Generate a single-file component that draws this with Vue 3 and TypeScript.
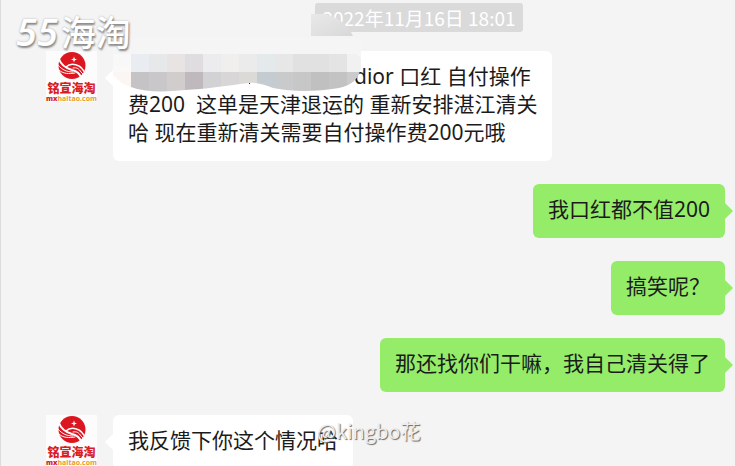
<script setup lang="ts">
interface Message {
  id: number
  side: 'in' | 'out'
  text: string
  masked?: boolean
}

const messages: Message[] = [
  {
    id: 1,
    side: 'in',
    masked: true,
    text: 'dior 口红 自付操作\n费200  这单是天津退运的 重新安排湛江清关\n哈 现在重新清关需要自付操作费200元哦',
  },
  { id: 2, side: 'out', text: '我口红都不值200' },
  { id: 3, side: 'out', text: '搞笑呢？' },
  { id: 4, side: 'out', text: '那还找你们干嘛，我自己清关得了' },
  { id: 5, side: 'in', text: '我反馈下你这个情况哈' },
]

const blockSize = 18
const upperBlocks = ['#e9edf1', '#e7e8ea', '#e8e4e3', '#dfdde0', '#ececee', '#f0efed', '#ebebeb', '#e4e9ec', '#e7e7e7', '#e1e1e2', '#e1e1e1', '#e4e4e4', '#ececec']
const lowerBlocks = ['#c5c3c5', '#cac7ca', '#d0cdcc', '#bfb9be', '#d2d2d4', '#d8d6d6', '#dcdad7', '#c5ccd1', '#c9cacc', '#c7c7c8', '#c0c0c0', '#c3c3c3', '#cbcbcb']
</script>

<template>
  <main class="chat">
    <div class="time-row"><time datetime="2022-11-16T18:01">2022年11月16日 18:01</time></div>

    <div v-for="m in messages" :key="m.id" class="row" :class="m.side">
      <div v-if="m.side === 'in'" class="avatar">
        <svg viewBox="0 0 28 28" aria-hidden="true">
          <circle cx="14" cy="13.5" r="13.5" fill="#dc1620" />
          <g fill="none" stroke="#fcfcfc" stroke-linecap="round">
            <path d="M1 7 C3 13 7 16 14 18 C19 19 22 22 23 26" stroke-width="2" />
            <path d="M8 15 C12 11 17 12 21 14 C25 16 26 20 28 22" stroke-width="1.5" />
            <path d="M15 16 C19 15 21 17 23 20 L26 23" stroke-width="1" />
            <path d="M0 13 C4 18 9 20 15 20 M1 18 C5 22 11 22 17 21" stroke-width="1" />
          </g>
          <path d="M16 4.5 L16.8 6.7 L19 7.5 L16.8 8.3 L16 10.5 L15.2 8.3 L13 7.5 L15.2 6.7Z" fill="#fff" />
        </svg>
        <strong>铭宣海淘</strong>
        <small><b>mx</b>haitao.com</small>
      </div>
      <div class="bubble"><span v-if="m.masked" class="gap"></span>{{ m.text }}<svg v-if="m.masked" class="mosaic" viewBox="0 0 260 92" aria-hidden="true">
          <defs>
            <clipPath id="brush">
              <path d="M18 40 H241 Q248 40 248 48 V52 Q246 70 226 74 Q190 80 160 74 Q146 68 136 69 C112 72 92 75 72 76 Q36 80 18 73Z" />
            </clipPath>
            <linearGradient id="smear" x1="0" y1="0" x2="1" y2="1">
              <stop offset="0" stop-color="#e9e9e9" />
              <stop offset="1" stop-color="#d8d8d8" />
            </linearGradient>
          </defs>
          <path d="M0 24 H248 V44 H0Z" fill="#f5f5f5" />
          <path d="M0 40 H18 V58 H0Z" fill="#faf9f8" />
          <path d="M0 58 H18 V73 Q8 70 0 61Z" fill="#fbf6f3" />
          <path d="M0 40 H248 V52 H0Z" fill="#f8f8f8" />
          <g clip-path="url(#brush)">
            <rect v-for="(c, i) in upperBlocks" :key="'u' + i" :x="18 + i * blockSize" y="40" :width="blockSize" height="18" :fill="c" />
            <rect v-for="(c, i) in lowerBlocks" :key="'l' + i" :x="18 + i * blockSize" y="58" :width="blockSize" height="24" :fill="c" />
            <path d="M234 40 H248 V58 H234Z" fill="#f1f1f1" />
          </g>
          <rect x="136" y="69" width="1" height="1" fill="#222" />
          <path d="M198 0 H212 Q232 5 240 22 H198Z" fill="url(#smear)" />
        </svg></div>
    </div>

    <div class="brand"><i>55</i>海淘</div>
    <div class="user-mark">@kingbo花</div>
  </main>
</template>

<style>
body {
  margin: 0;
  background: #f4f4f4;
}
</style>

<style scoped>
.chat {
  position: relative;
  box-sizing: border-box;
  height: 100vh;
  overflow: hidden;
  padding: 3px 10px 0 45px;
  border-left: 1px solid #dcdcdc;
  background: #f4f4f4;
  color: #1b1b1b;
  font-family: "Noto Sans", "Noto Sans CJK SC", sans-serif;
}
.time-row {
  display: flex;
  justify-content: center;
  margin: 0 -10px 19px -45px;
  padding-left: 102px;
}
time {
  padding: 0 7px;
  border-radius: 3px;
  background: #dadada;
  color: #fff;
  font-family: "Noto Sans CJK SC", sans-serif;
  font-size: 19px;
  line-height: 29px;
}
.row {
  display: flex;
  align-items: flex-start;
  gap: 16px;
  margin-bottom: 23px;
}
.out {
  justify-content: flex-end;
}
.bubble {
  position: relative;
  box-sizing: border-box;
  padding: 11px 15px 15px;
  border-radius: 6px;
  background: #fff;
  font-size: 21px;
  line-height: 28px;
  white-space: pre-wrap;
}
.bubble::before {
  content: "";
  position: absolute;
  top: 18px;
  left: -8px;
  width: 9px;
  height: 18px;
  background: #fff;
  clip-path: polygon(100% 0, 0 50%, 100% 100%);
}
.out .bubble {
  background: #95ec69;
}
.out .bubble::before {
  left: auto;
  right: -8px;
  background: #95ec69;
  clip-path: polygon(0 0, 100% 50%, 0 100%);
}
.gap {
  display: inline-block;
  width: 226px;
}
.mosaic {
  position: absolute;
  top: -37px;
  left: 0;
  width: 260px;
  height: 92px;
}
.avatar {
  display: flex;
  flex: none;
  flex-direction: column;
  align-items: center;
  width: 51px;
  height: 51px;
  background: #fcfcfc;
}
.avatar svg {
  width: 28px;
  height: 28px;
  margin-top: 1px;
}
.avatar strong {
  margin-top: 1px;
  color: #d81e24;
  font: 900 12px/14px "Noto Sans CJK SC", sans-serif;
}
.avatar small {
  color: #ec9a2c;
  font: 700 7px/7px "Open Sans", sans-serif;
}
.avatar b {
  color: #d81e24;
}
.brand,
.user-mark {
  position: absolute;
  color: #fff;
  white-space: nowrap;
  font-family: "Noto Sans CJK SC", sans-serif;
}
.brand {
  top: 11px;
  left: 15px;
  font-size: 35px;
  font-weight: 500;
  line-height: 40px;
  text-shadow: 1px 2px 2px #888, 0 0 2px #aaa;
}
.brand i {
  margin-right: 3px;
  font-family: "Open Sans", sans-serif;
  font-size: 38px;
  font-weight: 600;
}
.user-mark {
  top: 417px;
  left: 316px;
  color: #eee;
  font-size: 20px;
  line-height: 28px;
  text-shadow: 1px 1px 1px #666;
}
</style>
